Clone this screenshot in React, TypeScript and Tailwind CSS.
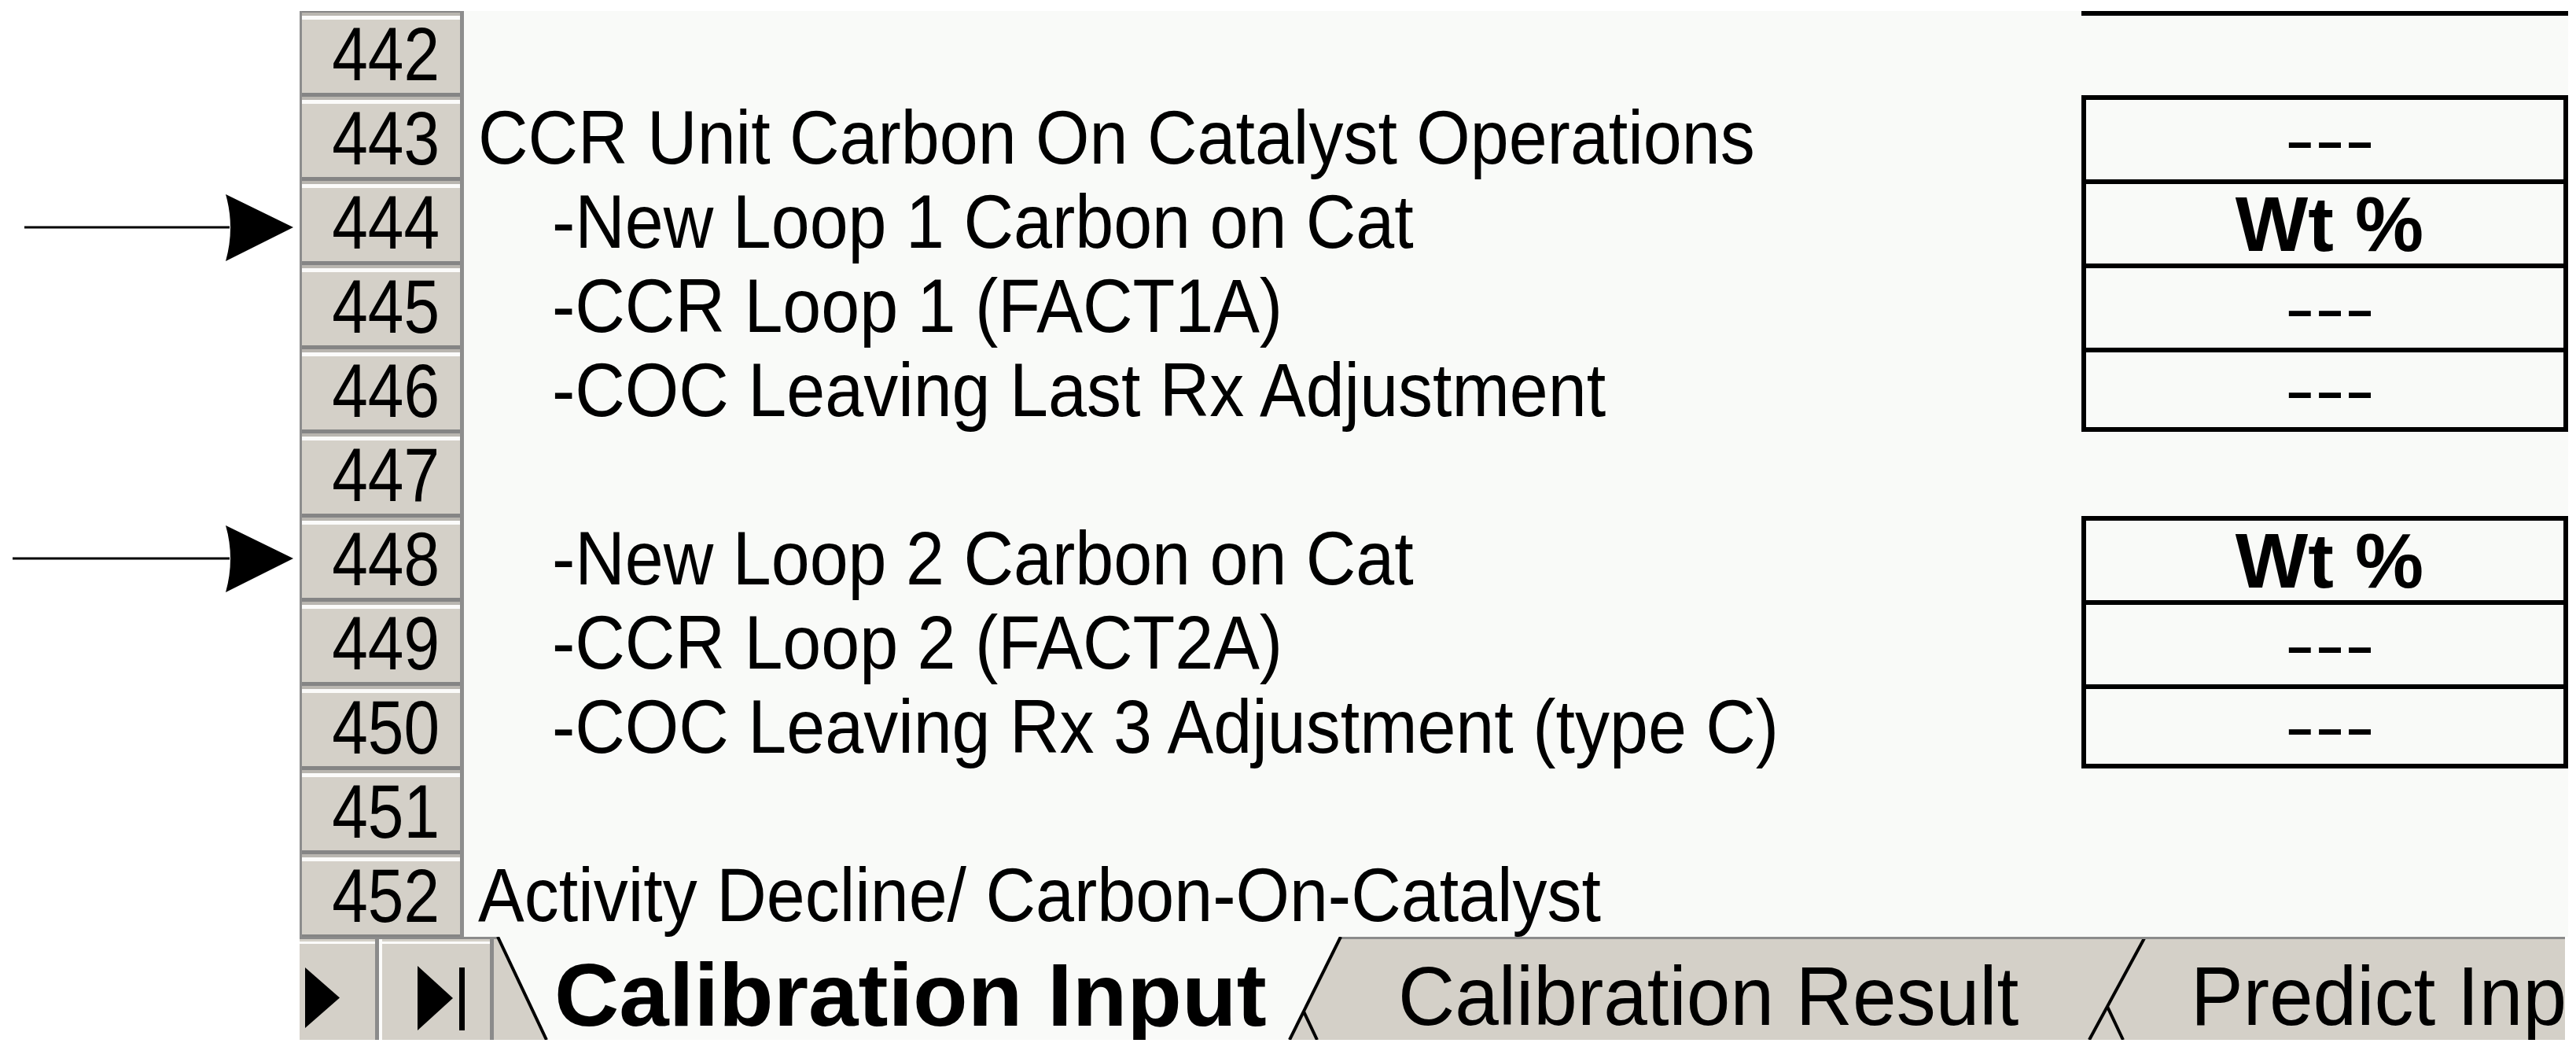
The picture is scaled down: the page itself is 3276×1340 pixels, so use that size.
import React from "react";

type Row = {
  n: number;
  text?: string;
  indent?: boolean;
  box?: "top" | "dash" | "wt";
  boxLast?: boolean;
  arrow?: "a" | "b";
};

const rows: Row[] = [
  { n: 442, box: "top" },
  { n: 443, text: "CCR Unit Carbon On Catalyst Operations", box: "dash" },
  { n: 444, text: "-New Loop 1 Carbon on Cat", indent: true, box: "wt", arrow: "a" },
  { n: 445, text: "-CCR Loop 1 (FACT1A)", indent: true, box: "dash" },
  { n: 446, text: "-COC Leaving Last Rx Adjustment", indent: true, box: "dash", boxLast: true },
  { n: 447 },
  { n: 448, text: "-New Loop 2 Carbon on Cat", indent: true, box: "wt", arrow: "b" },
  { n: 449, text: "-CCR Loop 2 (FACT2A)", indent: true, box: "dash" },
  { n: 450, text: "-COC Leaving Rx 3 Adjustment (type C)", indent: true, box: "dash", boxLast: true },
  { n: 451 },
  { n: 452, text: "Activity Decline/ Carbon-On-Catalyst" },
];

function Arrow({ kind }: { kind: "a" | "b" }) {
  if (kind === "a") {
    return (
      <svg width="381" height="107" viewBox="0 0 381 107" className="block">
        <line x1="31" y1="61" x2="292" y2="61" stroke="#000" strokeWidth="3" />
        <path d="M287 19 L373 61 L287 104 Q299 61 287 19 Z" fill="#000" />
      </svg>
    );
  }
  return (
    <svg width="381" height="107" viewBox="0 0 381 107" className="block">
      <line x1="16" y1="54" x2="292" y2="54" stroke="#000" strokeWidth="3" />
      <path d="M287 12 L373 54 L287 97 Q299 54 287 12 Z" fill="#000" />
    </svg>
  );
}

function HeaderCell({ n }: { n: number }) {
  return (
    <div className="w-[209px] h-full flex flex-col bg-[#d4d0c8] border-l-[3px] border-r-[5px] border-[#8d8d8d]">
      <div className="h-[2px] bg-[#858585]" />
      <div className="h-[4px] bg-[#b9b6b0]" />
      <div className="h-[5px] bg-[#fbfbfa]" />
      <div className="flex-1 flex items-center justify-end pr-[26px] pb-[6px]">
        <span className="inline-block scale-y-[1.17] font-['Liberation_Sans',Arial,sans-serif] text-[82px] leading-none text-black">
          {n}
        </span>
      </div>
      <div className="h-[3px] bg-[#858585]" />
    </div>
  );
}

function BoxCell({ row }: { row: Row }) {
  let cls = "w-[619px] h-full bg-[#f9faf8] flex items-center justify-center pl-[12px]";
  if (row.box === "top") {
    cls = "w-[619px] h-full bg-[#f9faf8] border-t-[6px] border-black";
  } else if (row.box && row.boxLast) {
    cls =
      "w-[619px] h-full bg-[#f9faf8] border-x-[6px] border-t-[6px] border-b-[6px] border-black flex items-center justify-center pl-[12px]";
  } else if (row.box) {
    cls =
      "w-[619px] h-full bg-[#f9faf8] border-x-[6px] border-t-[6px] border-black flex items-center justify-center pl-[12px]";
  }
  return (
    <div className={cls}>
      {row.box === "dash" && (
        <span className="inline-block scale-x-[1.3] font-['Liberation_Sans',Arial,sans-serif] text-[88px] leading-none text-black">
          ---
        </span>
      )}
      {row.box === "wt" && (
        <span className="inline-block font-['Liberation_Sans',Arial,sans-serif] font-bold text-[98px] leading-none text-black">
          Wt %
        </span>
      )}
    </div>
  );
}

function TabBar() {
  return (
    <div className="flex h-[131px]">
      <div className="w-[381px] h-full bg-white" />
      <div className="w-[2881px] h-full flex bg-[#d4d0c8] overflow-hidden">
        {/* navigation buttons */}
        <div className="w-[247px] h-full flex flex-col shrink-0">
          <div className="h-[3px] bg-[#8b8b8b]" />
          <div className="flex flex-1">
            <div className="w-[96px] h-full flex flex-col">
              <div className="h-[3px] bg-[#d4d0c8]" />
              <div className="h-[3px] bg-[#fbfbfa]" />
              <svg width="96" height="122" viewBox="0 0 96 122" className="block">
                <polygon points="7,30 51,68.5 7,107" fill="#000" />
              </svg>
            </div>
            <div className="w-[5px] h-full bg-[#8b8b8b]" />
            <div className="w-[4px] h-full bg-[#fbfbfa]" />
            <div className="w-[137px] h-full flex flex-col">
              <div className="h-[3px] bg-[#d4d0c8]" />
              <div className="h-[3px] bg-[#fbfbfa]" />
              <svg width="137" height="122" viewBox="0 0 137 122" className="block">
                <polygon points="45,28 90,69 45,110" fill="#000" />
                <rect x="98" y="30" width="7" height="80" fill="#000" />
              </svg>
            </div>
            <div className="w-[5px] h-full bg-[#8b8b8b]" />
          </div>
        </div>
        {/* sheet tabs */}
        <div className="relative flex-1 h-full overflow-hidden">
          <svg
            width="2634"
            height="131"
            viewBox="0 0 2634 131"
            className="absolute left-0 top-0 block"
          >
            <rect x="0" y="0" width="2634" height="131" fill="#d4d0c8" />
            {/* Predict Input */}
            <polygon points="2010,0 2700,0 2700,131 2072,131" fill="#d4d0c8" />
            <line x1="2010" y1="0" x2="2072" y2="131" stroke="#000" strokeWidth="4" />
            {/* Calibration Result */}
            <polygon points="985,0 2100,0 2029,131 1047,131" fill="#d4d0c8" />
            <line x1="985" y1="0" x2="1047" y2="131" stroke="#000" strokeWidth="4" />
            <line x1="2100" y1="0" x2="2029" y2="131" stroke="#000" strokeWidth="4" />
            {/* top border */}
            <rect x="0" y="0" width="2634" height="3" fill="#8b8b8b" />
            {/* Calibration Input (active) */}
            <polygon points="5,0 1077,0 1012,131 67,131" fill="#f9faf8" />
            <line x1="5" y1="0" x2="67" y2="131" stroke="#000" strokeWidth="4" />
            <line x1="1077" y1="0" x2="1012" y2="131" stroke="#000" strokeWidth="4" />
          </svg>
          <div className="relative flex h-full items-center pt-[18px] whitespace-nowrap">
            <div className="w-[1100px] shrink-0 pl-[77px]">
              <span className="inline-block font-['Liberation_Sans',Arial,sans-serif] font-bold text-[114px] leading-[0.9] text-black">
                Calibration Input
              </span>
            </div>
            <div className="w-[1058px] shrink-0 pl-[50px]">
              <span className="inline-block scale-y-[1.06] font-['Liberation_Sans',Arial,sans-serif] text-[100px] leading-[0.9] text-black">
                Calibration Result
              </span>
            </div>
            <div className="shrink-0">
              <span className="inline-block scale-y-[1.06] font-['Liberation_Sans',Arial,sans-serif] text-[100px] leading-[0.9] text-black">
                Predict Input
              </span>
            </div>
          </div>
        </div>
      </div>
      <div className="flex-1 h-full bg-white" />
    </div>
  );
}

export default function App() {
  return (
    <div className="w-[3276px] h-[1340px] bg-white overflow-hidden flex flex-col">
      <div className="h-[14px] shrink-0" />
      {rows.map((row) => (
        <div key={row.n} className="flex h-[107px] shrink-0">
          <div className="w-[381px] h-full bg-white">
            {row.arrow && <Arrow kind={row.arrow} />}
          </div>
          <HeaderCell n={row.n} />
          <div
            className={
              row.indent
                ? "w-[2057px] h-full bg-[#f9faf8] flex items-center pl-[112px] whitespace-nowrap"
                : "w-[2057px] h-full bg-[#f9faf8] flex items-center pl-[18px] whitespace-nowrap"
            }
          >
            {row.text && (
              <span className="inline-block scale-y-[1.09] font-['Liberation_Sans',Arial,sans-serif] text-[88px] leading-none text-black">
                {row.text}
              </span>
            )}
          </div>
          <BoxCell row={row} />
          <div className="flex-1 h-full bg-white" />
        </div>
      ))}
      <TabBar />
      <div className="flex-1 bg-white" />
    </div>
  );
}
